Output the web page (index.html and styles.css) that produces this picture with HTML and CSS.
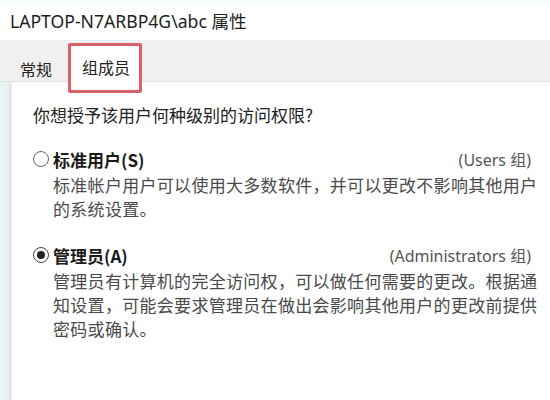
FILE: index.html
```html
<!DOCTYPE html>
<html lang="zh-CN">
<head>
    <meta charset="UTF-8">
    <meta name="viewport" content="width=device-width, initial-scale=1.0">
    <title>属性</title>
    <link rel="stylesheet" href="styles.css">
</head>
<body>
    <div class="titlebar">LAPTOP-N7ARBP4G\abc 属性</div>
    <div class="tabs">
        <div class="tab">常规</div>
        <div class="tab active">组成员</div>
    </div>
    <div class="main">
        <div class="edge"></div>
        <div class="panel">
            <p class="question">你想授予该用户何种级别的访问权限?</p>

            <div class="option">
                <div class="row">
                    <span class="radio"></span>
                    <span class="label">标准用户(S)</span>
                    <span class="group">(Users 组)</span>
                </div>
                <p class="desc">标准帐户用户可以使用大多数软件，并可以更改不影响其他用户的系统设置。</p>
            </div>

            <div class="option admin">
                <div class="row">
                    <span class="radio checked"></span>
                    <span class="label">管理员(A)</span>
                    <span class="group">(Administrators 组)</span>
                </div>
                <p class="desc">管理员有计算机的完全访问权，可以做任何需要的更改。根据通知设置，可能会要求管理员在做出会影响其他用户的更改前提供密码或确认。</p>
            </div>
        </div>
    </div>
</body>
</html>
```

FILE: styles.css
```css
*, *::after{
    margin: 0;
    padding: 0;
    box-sizing: border-box;
}
body{
    width: 550px;
    height: 400px;
    overflow: hidden;
    background-color: #fff;
    font-family: "Noto Sans", "Noto Sans CJK SC", sans-serif;
    color: #1e1e1e;
}
.titlebar{
    height: 40px;
    padding: 0 0 0 10px;
    line-height: 42px;
    font-size: 17.6px;
    background: linear-gradient(#f3fbfd, #fff 8px);
}
.tabs{
    height: 42px;
    display: flex;
    align-items: flex-end;
    background-color: #f0f0f0;
    border-bottom: 1px solid #e2e2e2;
    padding-left: 8px;
}
.tab{
    position: relative;
    height: 37px;
    padding: 13px 12px 0;
    line-height: 24px;
    font-size: 16px;
    font-family: "Noto Sans CJK SC", sans-serif;
    color: #222;
}
.tab.active{
    width: 72px;
    height: 39px;
    margin-left: 6px;
    margin-bottom: -1px;
    padding: 11px 11px 0;
    background-color: #fff;
    border: 1px solid #dcdcdc;
    border-bottom: none;
}
/* red marker drawn around the selected tab */
.tab.active::after{
    content: "";
    position: absolute;
    left: -3px;
    top: -1px;
    width: 74px;
    height: 50px;
    border: 3px solid #d9626a;
    border-radius: 2px;
}
.main{
    display: flex;
    height: 318px;
}
.edge{
    flex-shrink: 0;
    width: 12px;
    background: linear-gradient(90deg, #eaf6fb, #e4f4ee 70%, #eadbe6 85%, #f6eef2);
}
.panel{
    flex: 1;
    min-width: 0;
    padding: 21px 19px 0 21px;
    font-family: "Noto Sans CJK SC", sans-serif;
}
.question{
    font-size: 17px;
    line-height: 24px;
    color: #222;
}
.option{
    margin-top: 20px;
}
.option.admin{
    margin-top: 22px;
}
.row{
    display: flex;
    align-items: center;
    height: 24px;
}
.radio{
    flex-shrink: 0;
    width: 16px;
    height: 16px;
    border: 1.5px solid #666;
    border-radius: 50%;
    background-color: #fff;
    display: flex;
    justify-content: center;
    align-items: center;
}
.radio.checked{
    border-color: #444;
}
.radio.checked::after{
    content: "";
    width: 8px;
    height: 8px;
    border-radius: 50%;
    background-color: #222;
}
.label{
    margin-left: 4px;
    font-size: 17px;
    font-weight: bold;
    color: #1a1a1a;
}
.group{
    margin-left: auto;
    font-size: 16px;
    font-family: "Noto Sans", "Noto Sans CJK SC", sans-serif;
    color: #555;
}
.desc{
    margin-top: 2px;
    margin-right: -10px;
    padding-left: 20px;
    font-size: 17px;
    letter-spacing: 0.3px;
    line-height: 24px;
    color: #4a4a4a;
}
```
